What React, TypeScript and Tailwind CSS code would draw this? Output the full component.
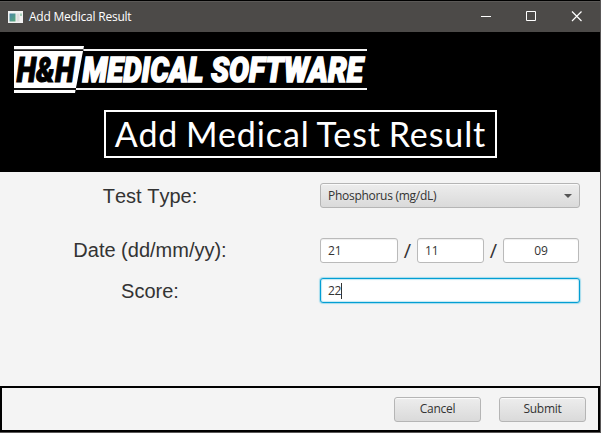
import type { ReactNode } from "react";

const ui = "font-['Open_Sans','Noto_Sans',sans-serif] text-[12px] text-[#333]";

function Logo() {
  return (
    <svg width="370" height="48" viewBox="14 46 370 48" className="block">
      <path d="M14 46H84L75 93H14Z" fill="#fff" />
      <path d="M14 50.2H83M14 89H76" stroke="#111" strokeWidth="1.8" />
      <path d="M83.5 50H367M76 89H367" stroke="#f4f4f4" strokeWidth="2" />
      <g fontFamily="Roboto, sans-serif" fontWeight="900" fontStyle="italic" fontSize="35" strokeWidth="1.5">
        <text x="16.5" y="81.5" textLength="58" lengthAdjust="spacingAndGlyphs" fill="#000" stroke="#000" strokeWidth="1">H&amp;H</text>
        <text x="82.5" y="81.5" textLength="121" lengthAdjust="spacingAndGlyphs" fill="#fff" stroke="#fff">MEDICAL</text>
        <text x="211" y="81.5" textLength="152" lengthAdjust="spacingAndGlyphs" fill="#fff" stroke="#fff">SOFTWARE</text>
      </g>
    </svg>
  );
}

function TitleBar() {
  return (
    <header className="flex h-8 shrink-0 items-center border-t border-black bg-[#4c4a48] pl-2 shadow-[inset_0_1px_0_#5b5957]">
      <svg width="15" height="12" className="mr-[6px] block">
        <defs>
          <linearGradient id="appIcon" x1="0" y1="0" x2="1" y2="1">
            <stop stopColor="#4b84a8" />
            <stop offset="1" stopColor="#58a978" />
          </linearGradient>
        </defs>
        <path d="M0 0H15V12H0Z" fill="#f2f2f2" />
        <path d="M1.5 2.5H7.5V10.5H1.5Z" fill="url(#appIcon)" />
        <path d="M8.5 2.5H11.5V10.5H8.5Z" fill="#dedede" />
        <path d="M12.5 2.5H13.5V5H12.5Z" fill="#57a97d" />
      </svg>
      <span className="flex-1 whitespace-nowrap font-['Open_Sans','Noto_Sans',sans-serif] text-[12px] tracking-[-0.22px] text-white">
        Add Medical Result
      </span>
      <svg width="102" height="11" className="mr-[17px] block" stroke="#fff" fill="none">
        <path d="M0 5.5H10" />
        <path d="M45.5 .5H54.5V9.5H45.5Z" />
        <path d="M91 .5L100.5 10M100.5 .5L91 10" strokeWidth="1.2" />
      </svg>
    </header>
  );
}

function Label({ children, className }: { children: ReactNode; className: string }) {
  return (
    <div className={`w-[300px] shrink-0 whitespace-nowrap text-center font-['Liberation_Sans',Arial,sans-serif] text-[20px] leading-[25px] text-[#333] ${className}`}>
      {children}
    </div>
  );
}

function Field({ value, className }: { value: string; className: string }) {
  return (
    <div className={`flex h-[25px] items-center rounded-[3px] border border-[#bababa] bg-white px-[7px] shadow-[inset_0_1px_1px_#eee] ${ui} ${className}`}>
      {value}
    </div>
  );
}

function Slash() {
  return (
    <span className="w-[19px] text-center font-['Open_Sans',sans-serif] text-[20px] leading-[25px] text-[#333]">/</span>
  );
}

function Button({ children }: { children: ReactNode }) {
  return (
    <button className={`h-[25px] w-[87px] rounded-[3px] border border-[#b5b5b5] bg-linear-to-b from-[#ededed] to-[#dadada] tracking-[-0.25px] shadow-[inset_0_1px_0_#fafafa] ${ui}`}>
      {children}
    </button>
  );
}

export default function App() {
  return (
    <div className="flex h-[433px] w-[601px] flex-col overflow-hidden border-r border-b border-[#5a5858] bg-[#f4f4f4]">
      <TitleBar />
      <section className="flex h-[140px] shrink-0 flex-col bg-black pt-[14px]">
        <div className="pl-[14px]">
          <Logo />
        </div>
        <h1 className="mt-4 ml-[104px] flex h-12 w-[393px] items-center justify-center border-2 border-white pb-[2px] whitespace-nowrap font-['Lato','Open_Sans',sans-serif] text-[34px] tracking-[0.9px] [word-spacing:-1.8px] text-white">
          Add Medical Test Result
        </h1>
      </section>
      <main className="flex flex-1 flex-col pt-[11px]">
        <div className="flex">
          <Label className="pt-px [font-kerning:none]">Test Type:</Label>
          <div className={`ml-5 flex h-[25px] w-[260px] items-center justify-between rounded-[3px] border border-[#b5b5b5] bg-linear-to-b from-[#ededed] to-[#dadada] pr-[7px] pl-[7px] tracking-[-0.28px] shadow-[inset_0_1px_0_#fafafa] ${ui}`}>
            Phosphorus (mg/dL)
            <svg width="8" height="4" className="block"><path d="M0 0H8L4 4Z" fill="#555" /></svg>
          </div>
        </div>
        <div className="mt-[29px] flex">
          <Label className="">Date (dd/mm/yy):</Label>
          <div className="ml-5 flex">
            <Field value="21" className="w-[78px]" />
            <Slash />
            <Field value="11" className="w-[67px]" />
            <Slash />
            <Field value="09" className="w-[76px] justify-center" />
          </div>
        </div>
        <div className="mt-[15px] flex">
          <Label className="pt-px">Score:</Label>
          <div className={`ml-5 flex h-[25px] w-[260px] items-center rounded-[3px] border border-[#039ed3] bg-white px-[7px] shadow-[0_0_1px_1px_#a5dced,inset_0_0_1px_1px_#c2e7f2] ${ui}`}>
            <span className="tracking-[-0.4px]">22</span>
            <span className="h-4 w-px bg-[#333]" />
          </div>
        </div>
      </main>
      <footer className="flex h-[46px] shrink-0 items-center justify-end gap-[18px] border-2 border-black pr-3">
        <Button>Cancel</Button>
        <Button>Submit</Button>
      </footer>
    </div>
  );
}
